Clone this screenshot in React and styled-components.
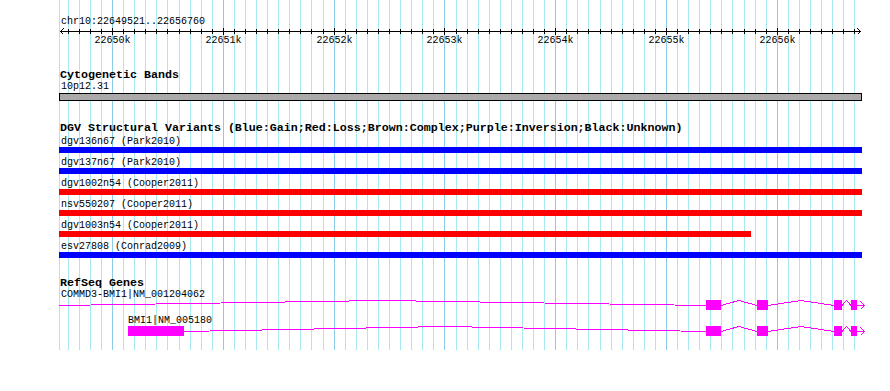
import React from "react";
import styled, { createGlobalStyle } from "styled-components";

const START = 22649521;
const END = 22656760;
const LEFT = 59;
const WIDTH = 802;
const SCALE = WIDTH / (END - START);
const toX = (bp) => Math.round((Math.max(bp, START) - START) * SCALE);

const GlobalStyle = createGlobalStyle`
  html, body {
    margin: 0;
    padding: 0;
    background: #fff;
  }
  body {
    font-family: "Liberation Mono", "DejaVu Sans Mono", monospace;
    color: #000;
  }
`;

const Panel = styled.div`
  position: relative;
  width: 890px;
  height: 391px;
  overflow: hidden;
  background: #fff;
`;

const GridLayer = styled.div`
  position: absolute;
  top: 0;
  left: 0;
  width: 100%;
  height: 350px;
`;

const GridLine = styled.div`
  position: absolute;
  top: 0;
  bottom: 0;
  width: 1px;
  background: ${(p) => (p.$major ? "#8ccbea" : "#a8e9ef")};
`;

const Tracks = styled.div`
  position: relative;
  width: ${WIDTH + 1}px;
  padding: 17px 0 0 ${LEFT}px;
`;

const RulerTitle = styled.div`
  font-size: 10px;
  line-height: 10px;
  padding-left: 2px;
`;

const RulerScale = styled.div`
  position: relative;
  height: 19px;
`;

const Drawing = styled.svg`
  display: block;
  overflow: visible;
`;

const TickLabel = styled.span`
  position: absolute;
  top: 9px;
  transform: translateX(-50%);
  font-size: 10px;
  line-height: 10px;
  white-space: nowrap;
`;

const TrackTitle = styled.div`
  margin-top: ${(p) => p.$gap}px;
  font-size: 11.67px;
  line-height: 12px;
  font-weight: bold;
  padding-left: 1px;
  white-space: pre;
`;

const BandLabel = styled.div`
  margin-top: 1px;
  font-size: 10px;
  line-height: 10px;
  padding-left: 2px;
`;

const BandBar = styled.div`
  box-sizing: border-box;
  margin-top: 1px;
  height: 8px;
  border: 1px solid #000;
  background: #aaaaaa;
`;

const FeatureList = styled.div`
  margin-top: 2px;
`;

const FeatureRow = styled.div`
  margin-bottom: 4px;
`;

const FeatureLabel = styled.div`
  font-size: 10px;
  line-height: 11px;
  padding-left: 2px;
  white-space: pre;
`;

const FeatureBar = styled.div`
  height: 6px;
  background: ${(p) => p.$color};
`;

const GeneList = styled.div`
  margin-top: 1px;
`;

const GeneRow = styled.div`
  margin-bottom: 6px;
`;

const GeneLabel = styled.div`
  font-size: 10px;
  line-height: 10px;
  white-space: pre;
`;

const variants = [
  { name: "dgv136n67 (Park2010)", color: "#0000ff", end: END },
  { name: "dgv137n67 (Park2010)", color: "#0000ff", end: END },
  { name: "dgv1002n54 (Cooper2011)", color: "#ff0000", end: END },
  { name: "nsv550207 (Cooper2011)", color: "#ff0000", end: END },
  { name: "dgv1003n54 (Cooper2011)", color: "#ff0000", end: 22655758 },
  { name: "esv27808 (Conrad2009)", color: "#0000ff", end: END },
];

const exons = [
  [22655361, 22655496],
  [22655821, 22655921],
  [22656516, 22656589],
  [22656670, 22656724],
];

const genes = [
  { name: "COMMD3-BMI1|NM_001204062", start: 22640000, blocks: exons },
  { name: "BMI1|NM_005180", start: 22650144, blocks: [[22650144, 22650649], ...exons] },
];

const ticks = [];
for (let bp = 22649600; bp <= 22656700; bp += 100) ticks.push(bp);

function Ruler() {
  return (
    <RulerScale>
      <Drawing width={WIDTH + 8} height={9} shapeRendering="crispEdges">
        <g stroke="#000" strokeWidth="1" fill="none">
          <line x1={1} y1={4.5} x2={WIDTH} y2={4.5} />
          <path d="M4.5 1.5 L1.5 4.5 L4.5 7.5" />
          <path d={`M${WIDTH - 3.5} 1.5 L${WIDTH - 0.5} 4.5 L${WIDTH - 3.5} 7.5`} />
          {ticks.map((bp) => {
            const x = toX(bp) + 0.5;
            const major = bp % 1000 === 0;
            return <line key={bp} x1={x} x2={x} y1={major ? 1 : 2} y2={major ? 8 : 7} />;
          })}
        </g>
      </Drawing>
      {ticks
        .filter((bp) => bp % 1000 === 0)
        .map((bp) => (
          <TickLabel key={bp} style={{ left: toX(bp) + 0.5 }}>
            {bp / 1000}k
          </TickLabel>
        ))}
    </RulerScale>
  );
}

function GeneGlyph({ gene }) {
  const blocks = gene.blocks.map(([s, e]) => [toX(s), toX(e)]);
  const hats = [];
  let prev = toX(gene.start);
  blocks.forEach(([s, e]) => {
    if (s > prev) {
      const mid = (prev + s) / 2;
      hats.push(`${prev},5.5 ${mid},0.5 ${s},5.5`);
    }
    prev = e;
  });
  const tail = prev;
  return (
    <Drawing width={WIDTH + 8} height={10} shapeRendering="crispEdges">
      <g stroke="#ff00ff" strokeWidth="1" fill="none">
        {hats.map((pts, i) => (
          <polyline key={i} points={pts} />
        ))}
        <line x1={tail} y1={5.5} x2={tail + 7} y2={5.5} />
        <path d={`M${tail + 3.5} 1.5 L${tail + 7.5} 5.5 L${tail + 3.5} 9.5`} />
      </g>
      {blocks.map(([s, e], i) => (
        <rect key={i} x={s} y={0} width={e - s} height={10} fill="#ff00ff" />
      ))}
    </Drawing>
  );
}

export default function App() {
  return (
    <Panel>
      <GlobalStyle />
      <GridLayer>
        <GridLine style={{ left: LEFT }} />
        {ticks.map((bp) => (
          <GridLine key={bp} $major={bp % 1000 === 0} style={{ left: LEFT + toX(bp) }} />
        ))}
      </GridLayer>
      <Tracks>
        <RulerTitle>chr10:22649521..22656760</RulerTitle>
        <Ruler />

        <TrackTitle $gap={23}>Cytogenetic Bands</TrackTitle>
        <BandLabel>10p12.31</BandLabel>
        <BandBar />

        <TrackTitle $gap={21}>
          DGV Structural Variants (Blue:Gain;Red:Loss;Brown:Complex;Purple:Inversion;Black:Unknown)
        </TrackTitle>
        <FeatureList>
          {variants.map((v) => (
            <FeatureRow key={v.name}>
              <FeatureLabel>{v.name}</FeatureLabel>
              <FeatureBar $color={v.color} style={{ width: toX(v.end) + 1 }} />
            </FeatureRow>
          ))}
        </FeatureList>

        <TrackTitle $gap={19}>RefSeq Genes</TrackTitle>
        <GeneList>
          {genes.map((g) => (
            <GeneRow key={g.name}>
              <GeneLabel style={{ paddingLeft: Math.max(toX(g.start), 2) }}>{g.name}</GeneLabel>
              <GeneGlyph gene={g} />
            </GeneRow>
          ))}
        </GeneList>
      </Tracks>
    </Panel>
  );
}
